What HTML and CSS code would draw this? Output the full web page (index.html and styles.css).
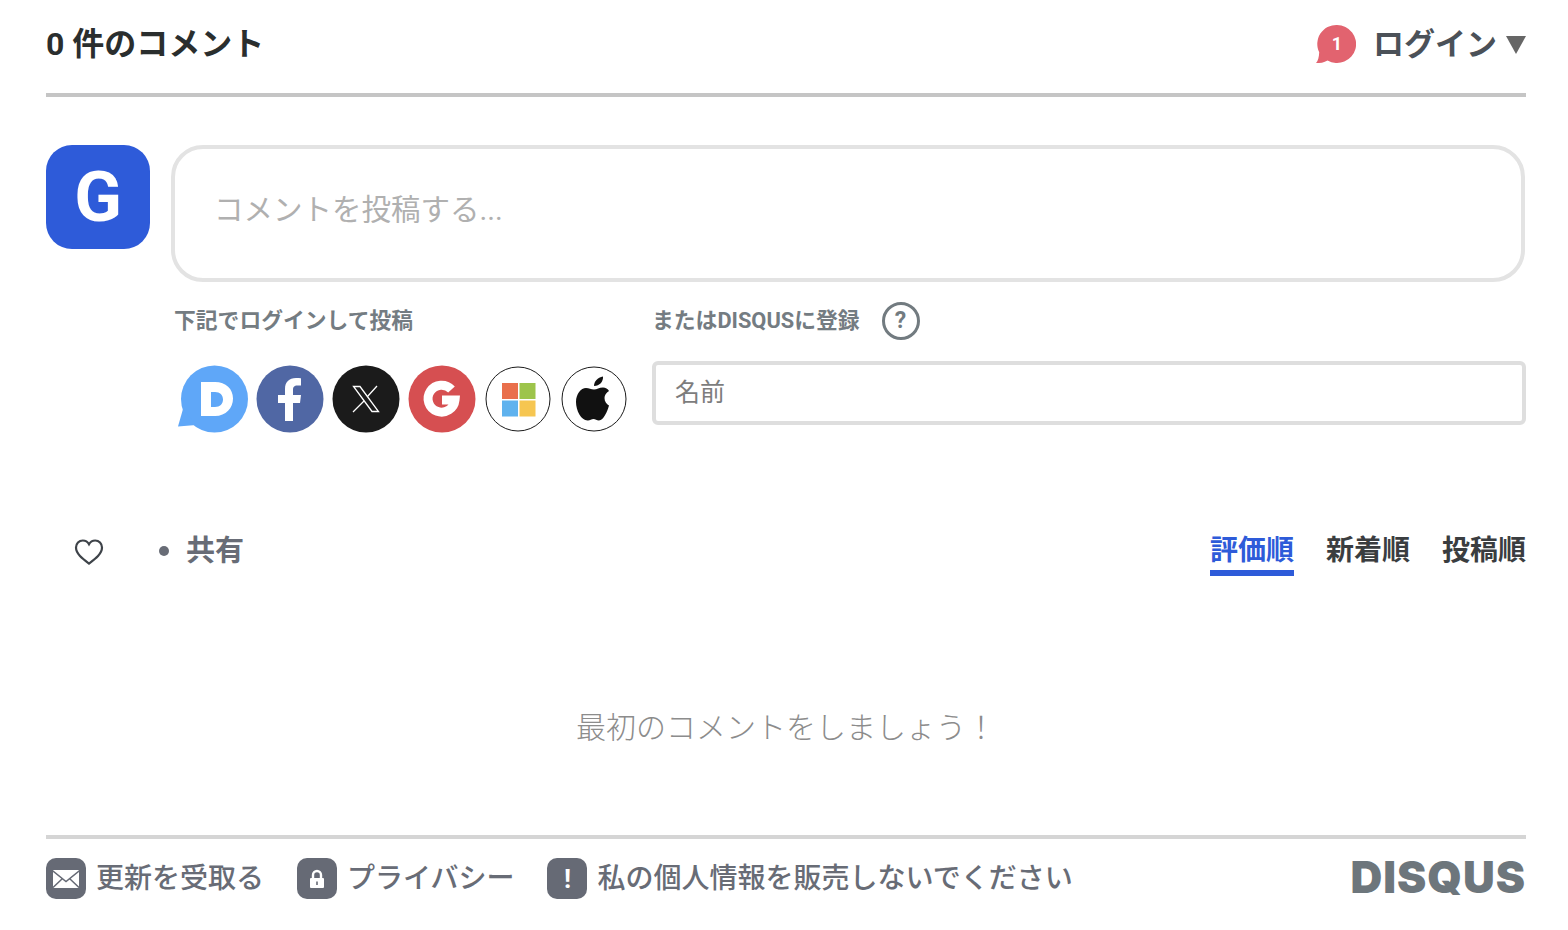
FILE: index.html
```html
<!DOCTYPE html>
<html lang="ja">
<head>
  <meta charset="UTF-8" />
  <title>Disqus</title>
  <link rel="stylesheet" href="styles.css">
</head>
<body>
  <!-- HEADER -->
  <header class="top">
    <h1 class="count">0 件のコメント</h1>
    <div class="login">
      <span class="notice">
        <svg viewBox="0 0 40 40" width="40" height="40">
          <path fill="#e2636f" d="M21 1a19 19 0 1 1-9.500 35.400C8 38.600 4 39 0 39c2-2 3-5.500 3.200-10.700A19 19 0 0 1 21 1z"/>
        </svg>
        <b class="notice-num">1</b>
      </span>
      <span class="login-text">ログイン</span>
      <span class="caret"></span>
    </div>
  </header>

  <!-- COMPOSER -->
  <section class="composer">
    <div class="avatar">G</div>
    <div class="composer-main">
      <textarea class="comment-box" placeholder="コメントを投稿する..."></textarea>
      <div class="auth">
        <div class="auth-social">
          <h2 class="auth-label">下記でログインして投稿</h2>
          <div class="providers">
            <!-- disqus -->
            <svg class="provider" viewBox="0 0 68 68">
              <circle cx="34.500" cy="34" r="33.500" fill="#5fa7f8"/>
              <path fill="#5fa7f8" d="M3 44L-2 61.500 16 60z"/>
              <path fill="#fff" fill-rule="evenodd" d="M21 17h14c11 0 18 7 18 16.500S46 51 35 51H21zM31 27v15h4c5 0 8-3 8-7.500S40 27 35 27z"/>
            </svg>
            <!-- facebook -->
            <svg class="provider" viewBox="0 0 68 68">
              <circle cx="34" cy="34" r="33.500" fill="#5067a4"/>
              <path fill="#fff" d="M29 56V38h-7v-8h7v-6c0-7 4-11 11-11 2.500 0 4 .2 5 .3v7.200h-3.500c-3.500 0-4.500 1.500-4.500 4.500v5h8l-1 8h-7v18z"/>
            </svg>
            <!-- x -->
            <svg class="provider" viewBox="0 0 68 68">
              <circle cx="34" cy="34" r="33.500" fill="#1b1b1b"/>
              <path fill="none" stroke="#fff" stroke-width="1.300" d="M21.500 21.500h6.500l18.500 25H40z"/>
              <path fill="none" stroke="#fff" stroke-width="1.300" d="M45 21l-9.500 10.500M32 36L21 47"/>
            </svg>
            <!-- google -->
            <svg class="provider" viewBox="0 0 68 68">
              <circle cx="34" cy="34" r="33.500" fill="#d64f51"/>
              <path fill="none" stroke="#fff" stroke-width="9" d="M43.500 24.500A13.500 13.500 0 1 0 47 35H34"/>
            </svg>
            <!-- microsoft -->
            <svg class="provider" viewBox="0 0 68 68">
              <circle cx="34" cy="34" r="32" fill="#fff" stroke="#1b1b1b" stroke-width="1"/>
              <rect x="18" y="18" width="16" height="16" fill="#e96f4b"/>
              <rect x="35.500" y="18" width="16" height="16" fill="#9dc44b"/>
              <rect x="18" y="35.500" width="16" height="16" fill="#5fb2ee"/>
              <rect x="35.500" y="35.500" width="16" height="16" fill="#f6c651"/>
            </svg>
            <!-- apple -->
            <svg class="provider" viewBox="0 0 68 68">
              <circle cx="34" cy="34" r="32" fill="#fff" stroke="#1b1b1b" stroke-width="1"/>
              <path fill="#111" d="M34 21c0-4.500 3.500-8.500 9-9.500.5 5-3.500 9.500-9 9.500z"/>
              <path fill="#111" d="M26 23c3 0 5 1.500 8 1.500s5-2 9-2c2.500 0 5 1.500 6 3.500-3 2-4.500 4-4.500 7 0 3.500 2 6 4.500 7.500-1.500 5.500-5.500 15-10 15-2.500 0-3.500-1.500-5.500-1.500s-3.500 1.500-5.500 1.500C21.500 56 16 46 16 37c0-8 5-14 10-14z"/>
            </svg>
          </div>
        </div>
        <div class="auth-signup">
          <div class="signup-head">
            <h2 class="auth-label">またはDISQUSに登録</h2>
            <span class="help">?</span>
          </div>
          <input class="name-input" type="text" placeholder="名前">
        </div>
      </div>
    </div>
  </section>

  <!-- TOOLBAR -->
  <nav class="toolbar">
    <svg class="heart" viewBox="0 0 30 28" width="30" height="28">
      <path fill="none" stroke="#3e4349" stroke-width="2.200" d="M15 25.500C9 21 2 16 2 9.500 2 5.500 5 2.500 8.800 2.500c2.700 0 4.900 1.400 6.200 3.800 1.300-2.400 3.500-3.800 6.200-3.800C25 2.500 28 5.500 28 9.500 28 16 21 21 15 25.500z"/>
    </svg>
    <span class="dot"></span>
    <a class="share">共有</a>
    <div class="tabs">
      <a class="tab active">評価順</a>
      <a class="tab">新着順</a>
      <a class="tab">投稿順</a>
    </div>
  </nav>

  <!-- EMPTY -->
  <p class="empty">最初のコメントをしましょう！</p>

  <!-- FOOTER -->
  <footer class="foot">
    <a class="foot-link">
      <span class="foot-icon">
        <svg viewBox="0 0 26 18" width="26" height="18">
          <rect width="26" height="18" rx="1" fill="#fff"/>
          <path fill="none" stroke="#666a75" stroke-width="1.500" d="M0 1L13 11.500 26 1M0 17.500L9.500 8.500M26 17.500L16.500 8.500"/>
        </svg>
      </span>
      <span class="foot-text">更新を受取る</span>
    </a>
    <a class="foot-link">
      <span class="foot-icon">
        <svg viewBox="0 0 16 20" width="16" height="20">
          <path fill="none" stroke="#fff" stroke-width="2.400" d="M4 9V6a4 4 0 0 1 8 0v3"/>
          <path fill="#fff" fill-rule="evenodd" d="M2 9h12a1 1 0 0 1 1 1v8a1 1 0 0 1-1 1H2a1 1 0 0 1-1-1v-8a1 1 0 0 1 1-1zM7.200 12.500V16h1.600v-3.500z"/>
        </svg>
      </span>
      <span class="foot-text">プライバシー</span>
    </a>
    <a class="foot-link">
      <span class="foot-icon foot-bang">!</span>
      <span class="foot-text">私の個人情報を販売しないでください</span>
    </a>
    <span class="logo">DISQUS</span>
  </footer>
</body>
</html>
```

FILE: styles.css
```css
/* BASE */
html { width: 100%; }
body {
  margin: 0;
  padding: 0 42px 0 46px;
  background: #fff;
  color: #2a2e2e;
  font-family: Roboto, "Noto Sans CJK JP", sans-serif;
}
h1, h2, p { margin: 0; }
a { text-decoration: none; }

/* HEADER */
.top {
  height: 93px;
  display: flex;
  justify-content: space-between;
  align-items: flex-start;
  border-bottom: 4px solid #c5c5c5;
}
.count {
  margin-top: 22px;
  font-size: 32px;
  line-height: 45px;
  font-weight: 700;
  color: #2a2e2e;
}
.login {
  margin-top: 19px;
  display: flex;
  align-items: center;
  height: 45px;
}
.notice {
  position: relative;
  width: 40px;
  height: 40px;
  margin-right: 17px;
  margin-top: 4px;
}
.notice svg { display: block; }
.notice-num {
  position: absolute;
  top: 0; left: 2px;
  width: 38px;
  text-align: center;
  font-size: 18px;
  line-height: 40px;
  color: #fff;
}
.login-text {
  font-size: 31px;
  font-weight: 700;
  color: #4b5158;
}
.caret {
  margin-left: 9px;
  width: 0; height: 0;
  border-left: 10px solid transparent;
  border-right: 10px solid transparent;
  border-top: 18px solid #666;
  margin-top: 6px;
}

/* COMPOSER */
.composer {
  margin-top: 48px;
  display: flex;
  gap: 21px;
}
.avatar {
  flex: none;
  width: 104px;
  height: 104px;
  border-radius: 26px;
  background: #2e5bd9;
  color: #fff;
  font-size: 70px;
  font-weight: 700;
  line-height: 104px;
  text-align: center;
}
.composer-main { flex: 1; min-width: 0; }
.comment-box {
  display: block;
  box-sizing: border-box;
  width: 1354px;
  height: 137px;
  padding: 39px 39px 0;
  border: 4px solid #e3e3e3;
  border-radius: 32px;
  outline: none;
  resize: none;
  font-family: Roboto, "Noto Sans CJK JP", sans-serif;
  font-size: 29.500px;
  line-height: 44px;
}
.comment-box::placeholder { color: #b0b0b0; opacity: 1; }

.auth {
  margin-top: 20px;
  display: flex;
}
.auth-social { width: 481px; flex: none; padding-left: 3px; box-sizing: border-box; }
.auth-label {
  font-size: 21.800px;
  line-height: 38px;
  font-weight: 700;
  color: #747c82;
}
.providers {
  margin-top: 25px;
  display: flex;
  gap: 8px;
  padding-left: 6px;
}
.provider { display: block; width: 68px; height: 68px; flex: none; overflow: visible; }

.auth-signup { flex: 1; min-width: 0; }
.signup-head { display: flex; align-items: center; gap: 22px; }
.help {
  box-sizing: border-box;
  width: 38px;
  height: 38px;
  border: 3.500px solid #727b80;
  border-radius: 50%;
  color: #727b80;
  font-size: 23px;
  font-weight: 700;
  line-height: 31px;
  text-align: center;
}
.name-input {
  display: block;
  box-sizing: border-box;
  width: 874px;
  height: 64px;
  margin-top: 21px;
  padding: 0 0 2px 19px;
  border: 4px solid #dedede;
  border-radius: 6px;
  outline: none;
  font-family: Roboto, "Noto Sans CJK JP", sans-serif;
  font-size: 25px;
}
.name-input::placeholder { color: #7d7d7d; opacity: 1; }

/* TOOLBAR */
.toolbar {
  margin-top: 86px;
  height: 60px;
  display: flex;
  align-items: flex-start;
}
.heart { margin: 19px 0 0 28px; flex: none; }
.dot {
  width: 10px;
  height: 10px;
  margin: 27px 17px 0 55px;
  border-radius: 50%;
  background: #686c76;
}
.share {
  font-size: 29px;
  line-height: 44px;
  margin-top: 10px;
  font-weight: 700;
  color: #686c76;
}
.tabs { margin-left: auto; display: flex; gap: 32px; }
.tab {
  height: 47px;
  margin-top: 10px;
  font-size: 28px;
  line-height: 44px;
  font-weight: 700;
  color: #3a3d40;
}
.tab.active {
  height: 47px;
  box-sizing: border-box;
  border-bottom: 6px solid #2e5bd9;
  color: #2e5bd9;
}

/* EMPTY */
.empty {
  margin-top: 127px;
  font-size: 30px;
  line-height: 44px;
  font-weight: 300;
  text-align: center;
  color: #8c8c8c;
}

/* FOOTER */
.foot {
  margin-top: 85px;
  height: 79px;
  border-top: 4px solid #d5d5d5;
  display: flex;
  align-items: center;
  gap: 33px;
}
.foot-link {
  display: flex;
  align-items: center;
  gap: 10px;
  font-size: 28px;
  font-weight: 500;
  color: #686c76;
}
.foot-text { margin-top: -5px; }
.foot-icon {
  flex: none;
  width: 40px;
  height: 41px;
  border-radius: 10px;
  background: #666a75;
  display: flex;
  align-items: center;
  justify-content: center;
}
.foot-bang {
  color: #fff;
  font-size: 26px;
  font-weight: 700;
}
.logo {
  margin-left: auto;
  margin-top: -4px;
  font-family: Inter, sans-serif;
  font-size: 44px;
  font-weight: 900;
  letter-spacing: 1px;
  color: #6d767c;
}
```
